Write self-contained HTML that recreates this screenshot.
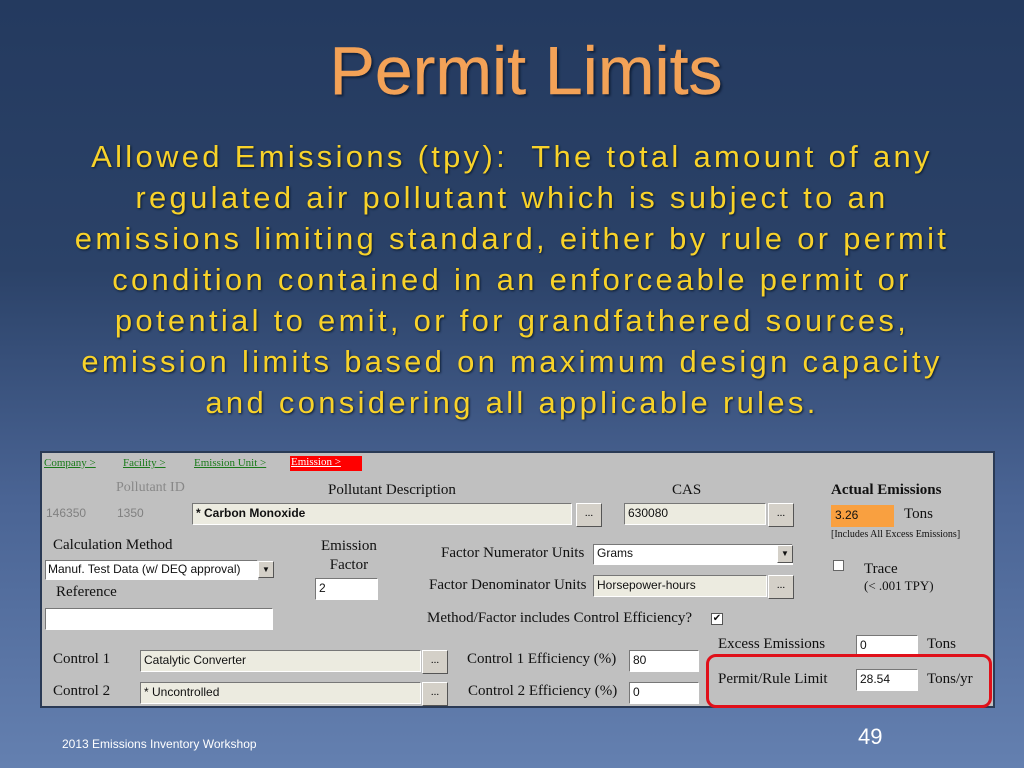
<!DOCTYPE html>
<html><head><meta charset="utf-8"><style>
*{margin:0;padding:0;box-sizing:border-box}
body{width:1024px;height:768px;overflow:hidden;background:linear-gradient(#243a5f 0%,#2b4268 35%,#4a6494 65%,#6480b0 100%);font-family:"Liberation Sans",sans-serif;position:relative}
.t{position:absolute;left:14px;width:1024px;text-align:center;color:#f3a257;font-size:68px;top:32px;text-shadow:2px 2px 2px #10203a;-webkit-text-stroke:0.4px #f3a257}
.b{position:absolute;left:0;width:1024px;text-align:center;color:#f8d22a;font-size:31px;letter-spacing:3.3px;line-height:41px;top:136px;text-shadow:1px 1px 2px #0a1a30;white-space:nowrap}
.p{position:absolute;left:40px;top:451px;width:955px;height:257px;background:#c0c0c0;border:2px solid #2a3a55;font-family:"Liberation Serif",serif;font-size:15px;color:#111}
.p div{position:absolute;white-space:nowrap}
.in{background:#ecebe0;border:1px solid #777;border-right-color:#fff;border-bottom-color:#fff;font-family:"Liberation Sans",sans-serif;font-size:12px;padding:2px 3px;height:22px}
.w{background:#fff}
.bt{background:#d4d0c8;border:1px solid #fff;border-right-color:#555;border-bottom-color:#555;width:26px;height:24px;text-align:center;font-size:11px;line-height:18px}
.lk{color:#1a7a1a;text-decoration:underline;font-size:11px}
.g{color:#808080;font-family:"Liberation Sans",sans-serif;font-size:12px}
</style></head><body>
<div class="t">Permit Limits</div>
<div class="b">Allowed Emissions (tpy):&nbsp; The total amount of any<br>regulated air pollutant which is subject to an<br>emissions limiting standard, either by rule or permit<br>condition contained in an enforceable permit or<br>potential to emit, or for grandfathered sources,<br>emission limits based on maximum design capacity<br>and considering all applicable rules.</div>
<div class="p">
<div class="lk" style="left:2px;top:4px">Company &gt;</div>
<div class="lk" style="left:81px;top:4px">Facility &gt;</div>
<div class="lk" style="left:152px;top:4px">Emission Unit &gt;</div>
<div style="left:248px;top:3px;width:72px;height:15px;background:#f00;color:#fff;font-size:11px;text-decoration:underline;padding-left:1px">Emission &gt;</div>
<div style="left:74px;top:27px;color:#888;font-size:14px">Pollutant ID</div>
<div style="left:286px;top:29px">Pollutant Description</div>
<div style="left:630px;top:29px">CAS</div>
<div style="left:789px;top:29px;font-weight:bold">Actual Emissions</div>
<div class="g" style="left:4px;top:53px">146350</div>
<div class="g" style="left:75px;top:53px">1350</div>
<div class="in" style="left:150px;top:50px;width:380px;font-weight:bold">* Carbon Monoxide</div>
<div class="bt" style="left:534px;top:50px">...</div>
<div class="in" style="left:582px;top:50px;width:142px">630080</div>
<div class="bt" style="left:726px;top:50px">...</div>
<div class="in" style="left:789px;top:52px;width:63px;background:#f9a040;border-color:#f9a040">3.26</div>
<div style="left:862px;top:53px">Tons</div>
<div style="left:789px;top:76px;font-size:10px">[Includes All Excess Emissions]</div>
<div style="left:11px;top:84px">Calculation Method</div>
<div style="left:279px;top:84px;text-align:center;line-height:19px">Emission<br>Factor</div>
<div class="in w" style="left:3px;top:107px;width:213px;height:20px;padding:1px 2px">Manuf. Test Data (w/ DEQ approval)</div>
<div class="bt" style="left:216px;top:108px;width:16px;height:17px;font-size:8px;line-height:15px">▼</div>
<div class="in w" style="left:273px;top:125px;width:63px">2</div>
<div style="left:399px;top:92px">Factor Numerator Units</div>
<div class="in w" style="left:551px;top:91px;width:200px;height:21px;padding:1px 3px">Grams</div>
<div class="bt" style="left:735px;top:92px;width:16px;height:18px;font-size:8px;line-height:15px">▼</div>
<div style="left:14px;top:131px">Reference</div>
<div style="left:387px;top:124px">Factor Denominator Units</div>
<div class="in" style="left:551px;top:122px;width:174px">Horsepower-hours</div>
<div class="bt" style="left:726px;top:122px">...</div>
<div style="left:791px;top:107px;width:11px;height:11px;background:#fff;border:1px solid #666"></div>
<div style="left:822px;top:108px">Trace</div>
<div style="left:822px;top:125px;font-size:13px">(&lt; .001 TPY)</div>
<div class="in w" style="left:3px;top:155px;width:228px">&nbsp;</div>
<div style="left:385px;top:157px">Method/Factor includes Control Efficiency?</div>
<div style="left:669px;top:160px;width:12px;height:12px;background:#fff;border:1px solid #555;font-size:10px;line-height:10px;text-align:center;font-family:'DejaVu Sans'">✔</div>
<div style="left:676px;top:183px">Excess Emissions</div>
<div class="in w" style="left:814px;top:182px;width:62px">0</div>
<div style="left:885px;top:183px">Tons</div>
<div style="left:11px;top:198px">Control 1</div>
<div class="in" style="left:98px;top:197px;width:281px">Catalytic Converter</div>
<div class="bt" style="left:380px;top:197px">...</div>
<div style="left:425px;top:198px">Control 1 Efficiency (%)</div>
<div class="in w" style="left:587px;top:197px;width:70px">80</div>
<div style="left:664px;top:201px;width:286px;height:54px;border:3px solid #e0101a;border-radius:10px"></div>
<div style="left:676px;top:218px">Permit/Rule Limit</div>
<div class="in w" style="left:814px;top:216px;width:62px">28.54</div>
<div style="left:885px;top:218px">Tons/yr</div>
<div style="left:11px;top:230px">Control 2</div>
<div class="in" style="left:98px;top:229px;width:281px">* Uncontrolled</div>
<div class="bt" style="left:380px;top:229px">...</div>
<div style="left:426px;top:230px">Control 2 Efficiency (%)</div>
<div class="in w" style="left:587px;top:229px;width:70px">0</div>
</div>
<div style="position:absolute;left:62px;top:737px;color:#fff;font-size:12px">2013 Emissions Inventory Workshop</div>
<div style="position:absolute;left:858px;top:724px;color:#fff;font-size:22px">49</div>
</body></html>
